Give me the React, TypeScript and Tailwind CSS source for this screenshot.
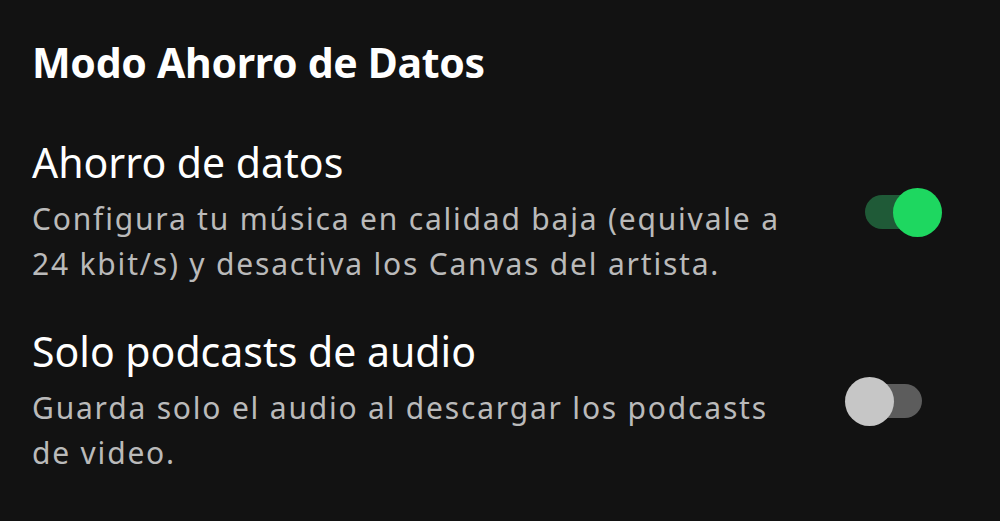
import React from 'react';

const font = { fontFamily: '"Noto Sans", Lato, sans-serif' };

function Toggle({ on }: { on: boolean }) {
  // track + knob laid side by side; the knob overlaps the track with a negative margin
  return on ? (
    <div className="flex items-center w-[97px] h-[50px] shrink-0 pl-[20px]">
      <div className="w-[67px] h-[34px] rounded-full bg-[#1f5a37] shrink-0" />
      <div className="-ml-[39px] w-[49px] h-[49px] rounded-full bg-[#1ed760] shrink-0" />
    </div>
  ) : (
    <div className="flex items-center w-[97px] h-[50px] shrink-0">
      <div className="w-[49px] h-[49px] rounded-full bg-[#c6c6c6] shrink-0 z-10" />
      <div className="-ml-[39px] w-[67px] h-[34px] rounded-full bg-[#5c5c5c] shrink-0" />
    </div>
  );
}

function Setting({ title, lines, on, className }: { title: string; lines: string[]; on: boolean; className?: string }) {
  return (
    <div className={`flex items-center justify-between pr-[58px] ${className ?? ''}`}>
      <div>
        <div className="text-[41px] leading-[48px] text-white">{title}</div>
        <div className="mt-[10px] text-[30px] leading-[45px] tracking-[1.8px] text-[#bababa]">
          {lines.map((l, i) => (
            <div key={i}>{l}</div>
          ))}
        </div>
      </div>
      <Toggle on={on} />
    </div>
  );
}

export default function App() {
  return (
    <div className="w-[1000px] h-[521px] bg-[#121212] overflow-hidden pl-[32px] pt-[38px]" style={font}>
      <h1 className="text-[41px] leading-[48px] font-bold tracking-[-0.3px] text-white">Modo Ahorro de Datos</h1>
      <Setting
        className="mt-[52px]"
        title="Ahorro de datos"
        lines={['Configura tu música en calidad baja (equivale a', '24 kbit/s) y desactiva los Canvas del artista.']}
        on
      />
      <Setting
        className="mt-[41px]"
        title="Solo podcasts de audio"
        lines={['Guarda solo el audio al descargar los podcasts', 'de video.']}
        on={false}
      />
    </div>
  );
}
